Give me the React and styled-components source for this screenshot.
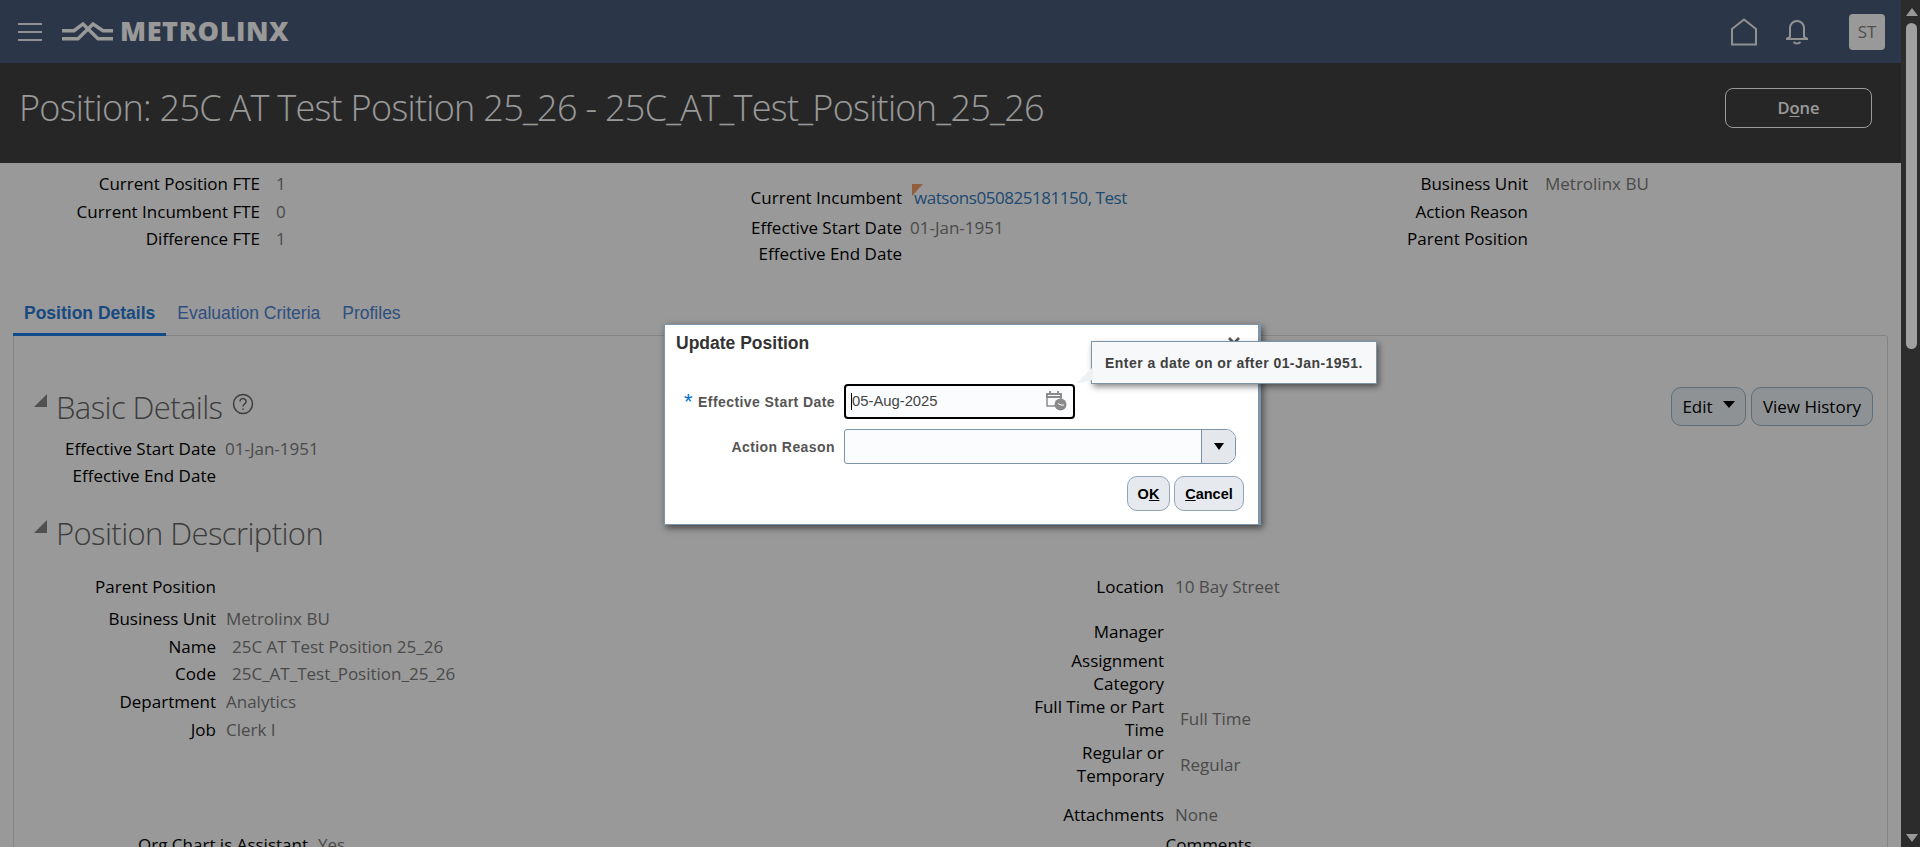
import React from 'react';
import styled, { createGlobalStyle } from 'styled-components';

const GlobalStyle = createGlobalStyle`
  html, body { margin: 0; padding: 0; height: 100%; overflow: hidden; background: #fff; }
  * { box-sizing: border-box; }
  body { font-family: "Open Sans", "Noto Sans", sans-serif; }
`;

const Shell = styled.div`
  display: flex;
  width: 1920px;
  height: 847px;
  overflow: hidden;
`;
const Page = styled.div`
  position: relative;
  width: 1901px;
  height: 847px;
  overflow: hidden;
  background: #fff;
`;
const Scrollbar = styled.div`
  width: 19px;
  height: 847px;
  background: #2c2c2c;
  display: flex;
  flex-direction: column;
  align-items: center;
  padding: 8px 0 5px;
`;
const Arrow = styled.div`
  width: 0;
  height: 0;
  border-left: 6px solid transparent;
  border-right: 6px solid transparent;
  border-${p => (p.$down ? 'top' : 'bottom')}: 8px solid #999;
  margin-left: 2px;
`;
const Thumb = styled.div`
  width: 11px;
  height: 326px;
  margin: 7px 0 auto 2px;
  background: #a0a0a0;
  border-radius: 6px;
`;

const Scrim = styled.div`
  position: absolute;
  inset: 0;
  background: rgba(0, 0, 0, 0.4);
  z-index: 5;
`;

const Header = styled.header`
  height: 63px;
  background: #485c78;
  display: flex;
  align-items: center;
  padding: 0 16px 0 18px;
`;
const Burger = styled.div`
  width: 24px;
  height: 18px;
  margin-right: 20px;
  display: flex;
  flex-direction: column;
  justify-content: space-between;
  span { display: block; height: 2px; background: #f2f2f2; }
`;
const LogoText = styled.div`
  font-weight: 800;
  font-size: 27px;
  letter-spacing: 0.6px;
  color: #fff;
  margin: -2px 0 0 7px;
  line-height: 1;
`;
const HeaderRight = styled.div`
  margin-left: auto;
  display: flex;
  align-items: center;
`;
const Avatar = styled.div`
  width: 36px;
  height: 36px;
  margin-left: 40px;
  border-radius: 4px;
  background: #fff;
  color: #858585;
  font-size: 17px;
  display: flex;
  align-items: center;
  justify-content: center;
`;

const TitleBar = styled.div`
  height: 100px;
  background: #404040;
  display: flex;
  align-items: flex-start;
  justify-content: space-between;
  padding: 25px 29px 0 19px;
`;
const Title = styled.h1`
  margin: 0;
  font-weight: 300;
  font-size: 36px;
  line-height: 40px;
  letter-spacing: -0.7px;
  color: #fff;
`;
const DoneButton = styled.button`
  width: 147px;
  height: 40px;
  background: transparent;
  border: 1px solid #fff;
  border-radius: 8px;
  color: #fff;
  font-family: inherit;
  font-weight: 600;
  font-size: 16.5px;
  padding: 0 0 2px;
  u { text-underline-offset: 2px; }
`;

const InfoGrid = styled.div`
  display: grid;
  grid-template-columns: 650px 626px 1fr;
  height: 130px;
  padding-top: 6px;
`;
const InfoColumn = styled.div`
  padding-top: ${p => p.$top || 0}px;
`;
const Row = styled.div`
  display: flex;
  align-items: center;
  height: ${p => p.$h || 28}px;
  margin-top: ${p => p.$mt || 0}px;
`;
const Label = styled.div`
  width: ${p => p.$w}px;
  flex: none;
  text-align: right;
  font-size: 17px;
  line-height: 23px;
  color: #000;
`;
const Value = styled.div`
  margin-left: ${p => p.$gap}px;
  font-size: 17px;
  color: #7c7c7c;
  white-space: nowrap;
`;
const LinkValue = styled(Value)`
  position: relative;
  color: #337bbe;
  letter-spacing: -0.45px;
  &::before {
    content: "";
    position: absolute;
    left: -2px;
    top: -2px;
    border-top: 12px solid #f29f66;
    border-right: 11px solid transparent;
  }
`;

const Tabs = styled.div`
  display: flex;
  margin: 0 0 0 13px;
  height: 43px;
  font-family: "Liberation Sans", Arial, sans-serif;
  font-size: 17.5px;
`;
const Tab = styled.div`
  display: flex;
  align-items: center;
  height: 43px;
  padding: 0 11px;
  color: ${p => (p.$active ? '#2a7bd5' : '#4d85d5')};
  font-weight: ${p => (p.$active ? 700 : 400)};
  border-bottom: 3px solid ${p => (p.$active ? '#197fe6' : 'transparent')};
`;
const Panel = styled.div`
  margin: -1px 13px 0 13px;
  border: 1px solid #dcdcdc;
  border-radius: 0 3px 0 0;
  padding: 50px 14px 0 20px;
  height: 520px;
`;
const SectionHead = styled.div`
  display: flex;
  align-items: center;
  justify-content: space-between;
  height: 40px;
`;
const Heading = styled.div`
  display: flex;
  align-items: center;
`;
const Twisty = styled.div`
  width: 0;
  height: 0;
  border-bottom: 13px solid #858585;
  border-left: 13px solid transparent;
  margin-right: 9px;
  margin-bottom: 12px;
`;
const HeadingText = styled.h2`
  margin: 0;
  padding-top: 1px;
  font-weight: 300;
  font-size: 31px;
  letter-spacing: -0.6px;
  line-height: 40px;
  color: #666;
`;
const HelpIcon = styled.svg`
  margin-left: 10px;
  margin-bottom: 4px;
`;
const Actions = styled.div`
  display: flex;
  gap: 5px;
`;
const ActionButton = styled.button`
  height: 39px;
  width: ${p => p.$w}px;
  border: 1px solid #9eb6c8;
  border-radius: 10px;
  background: #edf3f8;
  color: #000;
  font-family: inherit;
  font-size: 17px;
  display: flex;
  align-items: center;
  justify-content: center;
  gap: 10px;
  padding: 0;
`;
const Caret = styled.span`
  width: 0;
  height: 0;
  border-left: 6px solid transparent;
  border-right: 6px solid transparent;
  border-top: 7px solid #000;
  margin-top: -4px;
`;
const BasicRows = styled.div`
  margin: 9px 0 23px;
`;
const TwoCols = styled.div`
  display: grid;
  grid-template-columns: 810px 1fr;
  margin-top: 16px;
`;
const Col = styled.div`
  display: flex;
  flex-direction: column;
`;
const WrapLabel = styled(Label)`
  padding-left: 170px;
`;

const Dialog = styled.div`
  position: absolute;
  left: 664px;
  top: 324px;
  width: 597px;
  height: 201px;
  z-index: 10;
  background: #fff;
  border: 1px solid #7b95ab;
  border-right-width: 3px;
  box-shadow: 2px 3px 7px rgba(0, 0, 0, 0.55);
  padding: 7px 12px 0 11px;
  font-family: "Liberation Sans", Arial, sans-serif;
`;
const DialogTitleRow = styled.div`
  display: flex;
  justify-content: space-between;
  height: 23px;
`;
const DialogTitle = styled.div`
  font-weight: 700;
  font-size: 17.5px;
  line-height: 22px;
  color: #333;
`;
const CloseIcon = styled.svg`
  margin: 5px 6px 0 0;
`;
const DialogRow = styled.div`
  display: flex;
  align-items: center;
  height: 35px;
  margin-top: ${p => p.$mt}px;
`;
const DialogLabel = styled.div`
  position: relative;
  width: 159px;
  flex: none;
  text-align: right;
  margin-right: 9px;
  font-size: 14px;
  font-weight: 700;
  color: #555;
  letter-spacing: 0.43px;
  white-space: nowrap;
`;
const Required = styled.span`
  position: absolute;
  left: 8px;
  top: -3px;
  font-size: 22px;
  font-weight: 400;
  line-height: 22px;
  color: #0572ce;
`;
const DateInput = styled.div`
  width: 231px;
  height: 35px;
  border: 2px solid #000;
  border-radius: 4px;
  background: #fafcfe;
  display: flex;
  align-items: center;
  padding-left: 5px;
  font-size: 14.8px;
  color: #444;
  span { border-left: 1px solid #000; line-height: 17px; margin-right: -1px; }
`;
const CalendarIcon = styled.svg`
  margin-left: auto;
  margin-right: 6px;
  margin-top: -2px;
`;
const SelectBox = styled.div`
  display: flex;
  width: 392px;
  height: 35px;
  border: 1px solid #7d93a8;
  border-radius: 3px 10px 10px 3px;
  background: #fafcfe;
  overflow: hidden;
`;
const SelectField = styled.div`
  flex: 1;
`;
const SelectButton = styled.div`
  width: 34px;
  background: #e4e8ec;
  border-left: 1px solid #7d93a8;
  display: flex;
  align-items: center;
  justify-content: center;
  &::after {
    content: "";
    border-left: 5.5px solid transparent;
    border-right: 5.5px solid transparent;
    border-top: 7px solid #000;
  }
`;
const DialogActions = styled.div`
  display: flex;
  justify-content: flex-end;
  gap: 4px;
  margin-top: 12px;
  padding-right: 2px;
`;
const DialogButton = styled.button`
  height: 35px;
  width: ${p => p.$w}px;
  border: 1px solid #8fa5b8;
  border-radius: 10px;
  background: #e6eaee;
  color: #000;
  font-family: inherit;
  font-weight: 700;
  font-size: 14.5px;
  padding: 0;
`;
const Tooltip = styled.div`
  position: absolute;
  left: 1091px;
  top: 341px;
  width: 286px;
  height: 43px;
  z-index: 12;
  background: #f7f8fa;
  border: 1px solid #7d93a8;
  box-shadow: 2px 3px 6px rgba(0, 0, 0, 0.45);
  display: flex;
  align-items: center;
  padding-left: 13px;
  font-family: "Liberation Sans", Arial, sans-serif;
  font-weight: 700;
  font-size: 14px;
  letter-spacing: 0.45px;
  color: #404040;
  white-space: nowrap;
`;
const TooltipTail = styled.svg`
  position: absolute;
  left: -17px;
  bottom: -1px;
`;

const topLeft = [['Current Position FTE', '1', 28], ['Current Incumbent FTE', '0', 28], ['Difference FTE', '1', 26]];

function HomeIcon() {
  return (
    <svg width="28" height="28" viewBox="0 0 28 28" fill="none" stroke="#f2f2f2" strokeWidth="2">
      <path d="M2 11 14 1.5 26 11v15.5H2z" />
    </svg>
  );
}

const BellSvg = styled.svg`
  margin-left: 27px;
`;

function BellIcon() {
  return (
    <BellSvg width="24" height="26" viewBox="0 0 24 26" fill="none" stroke="#f2f2f2" strokeWidth="2">
      <path d="M5 18V9a7 7 0 0 1 14 0v9l3 1.5v.5H2v-.5z" />
      <path d="M8.5 23c2 2 5 2 7 0" />
    </BellSvg>
  );
}

function Logo() {
  return (
    <svg width="51" height="20" viewBox="0 0 51 20" fill="none" stroke="#fff" strokeWidth="3.4">
      <path d="M0 8.7h12L21 2l15 14.7h15" />
      <path d="M0 16.7h16L31 2l10 6.7h10" />
    </svg>
  );
}

export default function App() {
  return (
    <Shell>
      <GlobalStyle />
      <Page>
        <Header>
          <Burger><span /><span /><span /></Burger>
          <Logo />
          <LogoText>METROLINX</LogoText>
          <HeaderRight>
            <HomeIcon />
            <BellIcon />
            <Avatar>ST</Avatar>
          </HeaderRight>
        </Header>
        <TitleBar>
          <Title>Position: 25C AT Test Position 25_26 - 25C_AT_Test_Position_25_26</Title>
          <DoneButton>D<u>o</u>ne</DoneButton>
        </TitleBar>

        <InfoGrid>
          <InfoColumn>
            {topLeft.map(([l, v, h]) => (
              <Row key={l} $h={h}><Label $w={260}>{l}</Label><Value $gap={16}>{v}</Value></Row>
            ))}
          </InfoColumn>
          <InfoColumn $top={14}>
            <Row><Label $w={252}>Current Incumbent</Label><LinkValue $gap={12}>watsons050825181150, Test</LinkValue></Row>
            <Row $h={32}><Label $w={252}>Effective Start Date</Label><Value $gap={8}>01-Jan-1951</Value></Row>
            <Row $h={20}><Label $w={252}>Effective End Date</Label></Row>
          </InfoColumn>
          <InfoColumn>
            <Row><Label $w={252}>Business Unit</Label><Value $gap={17}>Metrolinx BU</Value></Row>
            <Row><Label $w={252}>Action Reason</Label></Row>
            <Row $h={26}><Label $w={252}>Parent Position</Label></Row>
          </InfoColumn>
        </InfoGrid>

        <Tabs>
          <Tab $active>Position Details</Tab>
          <Tab>Evaluation Criteria</Tab>
          <Tab>Profiles</Tab>
        </Tabs>

        <Panel>
          <SectionHead>
            <Heading>
              <Twisty />
              <HeadingText>Basic Details</HeadingText>
              <HelpIcon width="22" height="22" viewBox="0 0 22 22" fill="none" stroke="#666" strokeWidth="1.5">
                <circle cx="11" cy="11" r="9.5" />
                <path d="M8 8.5a3 3 0 1 1 4.6 2.5c-1 .7-1.6 1.2-1.6 2.5" />
                <path d="M11 15.5v1.5" />
              </HelpIcon>
            </Heading>
            <Actions>
              <ActionButton $w={75}>Edit <Caret /></ActionButton>
              <ActionButton $w={122}>View History</ActionButton>
            </Actions>
          </SectionHead>
          <BasicRows>
            <Row $h={27}><Label $w={182}>Effective Start Date</Label><Value $gap={9}>01-Jan-1951</Value></Row>
            <Row $h={27}><Label $w={182}>Effective End Date</Label></Row>
          </BasicRows>
          <SectionHead>
            <Heading>
              <Twisty />
              <HeadingText>Position Description</HeadingText>
            </Heading>
          </SectionHead>
          <TwoCols>
            <Col>
              <Row $h={36}><Label $w={182}>Parent Position</Label></Row>
              <Row><Label $w={182}>Business Unit</Label><Value $gap={10}>Metrolinx BU</Value></Row>
              <Row><Label $w={182}>Name</Label><Value $gap={16}>25C AT Test Position 25_26</Value></Row>
              <Row $h={27}><Label $w={182}>Code</Label><Value $gap={16}>25C_AT_Test_Position_25_26</Value></Row>
              <Row><Label $w={182}>Department</Label><Value $gap={10}>Analytics</Value></Row>
              <Row><Label $w={182}>Job</Label><Value $gap={10}>Clerk I</Value></Row>
              <Row $mt={87}><Label $w={274}>Org Chart is Assistant</Label><Value $gap={10}>Yes</Value></Row>
            </Col>
            <Col>
              <Row $h={36}><Label $w={320}>Location</Label><Value $gap={11}>10 Bay Street</Value></Row>
              <Row $h={24} $mt={15}><Label $w={320}>Manager</Label></Row>
              <Row $h={46} $mt={6}><WrapLabel $w={320}>Assignment Category</WrapLabel></Row>
              <Row $h={46}><WrapLabel $w={320}>Full Time or Part Time</WrapLabel><Value $gap={16}>Full Time</Value></Row>
              <Row $h={46}><WrapLabel $w={320}>Regular or Temporary</WrapLabel><Value $gap={16}>Regular</Value></Row>
              <Row $h={40} $mt={7}><Label $w={320}>Attachments</Label><Value $gap={11}>None</Value></Row>
              <Row $h={20}><Label $w={408}>Comments</Label></Row>
            </Col>
          </TwoCols>
        </Panel>

        <Scrim />
        <Dialog>
          <DialogTitleRow>
            <DialogTitle>Update Position</DialogTitle>
            <CloseIcon width="12" height="12" viewBox="0 0 12 12" stroke="#555" strokeWidth="2.6">
              <path d="M1 1l10 10M11 1 1 11" />
            </CloseIcon>
          </DialogTitleRow>
          <DialogRow $mt={29}>
            <DialogLabel><Required>*</Required>Effective Start Date</DialogLabel>
            <DateInput>
              <span>05-Aug-2025</span>
              <CalendarIcon width="21" height="21" viewBox="0 0 21 21" fill="none">
                <path d="M1 4h14v12H1z" stroke="#8a8a8a" strokeWidth="1.5" />
                <path d="M1 4h14v3H1zM4 1v4M12 1v4" stroke="#8a8a8a" strokeWidth="1.8" />
                <circle cx="14.5" cy="14.5" r="6" fill="#8a8a8a" />
                <path d="M12 13.5l3 1.5h3" stroke="#fff" strokeWidth="1" />
              </CalendarIcon>
            </DateInput>
          </DialogRow>
          <DialogRow $mt={10}>
            <DialogLabel>Action Reason</DialogLabel>
            <SelectBox>
              <SelectField />
              <SelectButton />
            </SelectBox>
          </DialogRow>
          <DialogActions>
            <DialogButton $w={43}>O<u>K</u></DialogButton>
            <DialogButton $w={70}><u>C</u>ancel</DialogButton>
          </DialogActions>
        </Dialog>
        <Tooltip>
          Enter a date on or after 01-Jan-1951.
          <TooltipTail width="18" height="18" viewBox="0 0 18 18">
            <path d="M18 1 L1 17.5 L18 14 Z" fill="#eef1f4" />
          </TooltipTail>
        </Tooltip>
      </Page>
      <Scrollbar>
        <Arrow />
        <Thumb />
        <Arrow $down />
      </Scrollbar>
    </Shell>
  );
}
